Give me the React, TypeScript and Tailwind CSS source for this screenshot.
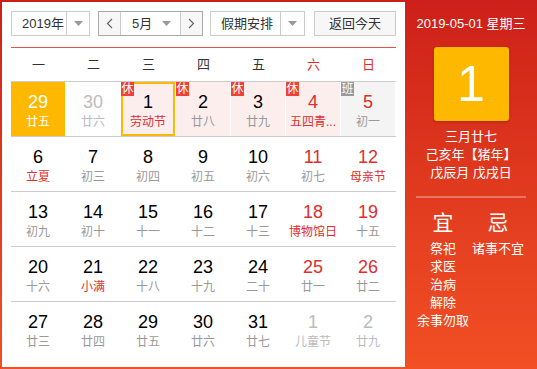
import React from "react";

type Day = {
  n: number;
  l: string;
  red?: boolean; // red number
  lred?: boolean; // red lunar text
  other?: boolean; // not in this month
  tag?: "休" | "班";
  selected?: boolean;
  today?: boolean;
};

const weeks: Day[][] = [
  [
    { n: 29, l: "廿五", other: true, today: true },
    { n: 30, l: "廿六", other: true },
    { n: 1, l: "劳动节", lred: true, tag: "休", selected: true },
    { n: 2, l: "廿八", tag: "休" },
    { n: 3, l: "廿九", tag: "休" },
    { n: 4, l: "五四青...", red: true, lred: true, tag: "休" },
    { n: 5, l: "初一", red: true, tag: "班" },
  ],
  [
    { n: 6, l: "立夏", lred: true },
    { n: 7, l: "初三" },
    { n: 8, l: "初四" },
    { n: 9, l: "初五" },
    { n: 10, l: "初六" },
    { n: 11, l: "初七", red: true },
    { n: 12, l: "母亲节", red: true, lred: true },
  ],
  [
    { n: 13, l: "初九" },
    { n: 14, l: "初十" },
    { n: 15, l: "十一" },
    { n: 16, l: "十二" },
    { n: 17, l: "十三" },
    { n: 18, l: "博物馆日", red: true, lred: true },
    { n: 19, l: "十五", red: true },
  ],
  [
    { n: 20, l: "十六" },
    { n: 21, l: "小满", lred: true },
    { n: 22, l: "十八" },
    { n: 23, l: "十九" },
    { n: 24, l: "二十" },
    { n: 25, l: "廿一", red: true },
    { n: 26, l: "廿二", red: true },
  ],
  [
    { n: 27, l: "廿三" },
    { n: 28, l: "廿四" },
    { n: 29, l: "廿五" },
    { n: 30, l: "廿六" },
    { n: 31, l: "廿七" },
    { n: 1, l: "儿童节", other: true },
    { n: 2, l: "廿九", other: true },
  ],
];

const weekdays = ["一", "二", "三", "四", "五", "六", "日"];

function Caret() {
  return (
    <svg width="9" height="5" viewBox="0 0 9 5" className="fill-[#999]">
      <path d="M0 0h9L4.5 5z" />
    </svg>
  );
}

function Cell({ d }: { d: Day }) {
  let bg = "bg-white";
  if (d.today) bg = "bg-[#ffb800]";
  else if (d.tag === "休") bg = "bg-[#fdeeee]";
  else if (d.tag === "班") bg = "bg-[#f4f4f4]";

  let num = "text-black";
  if (d.today) num = "text-white";
  else if (d.other) num = "text-[#bbbbbb]";
  else if (d.red) num = "text-[#e02d2d]";

  let lunar = "text-[#999]";
  if (d.today) lunar = "text-white";
  else if (d.other) lunar = "text-[#bbbbbb]";
  else if (d.lred) lunar = "text-[#e02d2d]";

  return (
    <div className="relative h-[54px] mr-px">
      <div
        className={`flex h-full flex-col items-center ${bg} ${
          d.selected ? "border-2 border-[#ffb800] pt-[8px]" : "pt-[10px]"
        }`}
      >
        <span className={`text-[18px] leading-[20px] ${num}`}>{d.n}</span>
        <span className={`mt-[1px] text-[12px] leading-[18px] whitespace-nowrap ${lunar}`}>{d.l}</span>
      </div>
      {d.tag && (
        <span
          className={`absolute left-0 top-0 flex h-[14px] w-[13px] items-center justify-center text-[12px] leading-none text-white ${
            d.tag === "休" ? "bg-[#f04134]" : "bg-[#999]"
          }`}
        >
          {d.tag}
        </span>
      )}
    </div>
  );
}

export default function App() {
  return (
    <div
      className="flex h-[369px] w-[537px] bg-gradient-to-b from-[#cd1f19] to-[#f24f24] text-[#333]"
      style={{ fontFamily: "'Liberation Sans', 'Noto Sans CJK SC', sans-serif" }}
    >
      {/* Calendar */}
      <div className="my-[2px] ml-[2px] w-[403px] bg-white px-[9px] pt-[9px]">
        {/* Controls */}
        <div className="flex h-[25px] items-stretch text-[13px]">
          <div className="flex w-[79px] border border-[#ccc]">
            <div className="flex flex-1 items-center pl-[10px]">2019年</div>
            <div className="flex w-[23px] items-center justify-center border-l border-[#ccc]">
              <Caret />
            </div>
          </div>
          <div className="ml-[8px] flex w-[105px] border border-[#aaa]">
            <div className="flex w-[21px] items-center justify-center bg-[#f7f7f7] text-[#666]">
              <svg width="7" height="11" viewBox="0 0 7 11" fill="none" stroke="#666" strokeWidth="1.2">
                <path d="M6 1L1.5 5.5L6 10" />
              </svg>
            </div>
            <div className="flex flex-1 items-center justify-between border-x border-[#ccc] pl-[11px] pr-[9px]">
              <span>5月</span>
              <Caret />
            </div>
            <div className="flex w-[21px] items-center justify-center bg-[#f7f7f7]">
              <svg width="7" height="11" viewBox="0 0 7 11" fill="none" stroke="#666" strokeWidth="1.2">
                <path d="M1 1L5.5 5.5L1 10" />
              </svg>
            </div>
          </div>
          <div className="ml-[7px] flex w-[95px] border border-[#ccc]">
            <div className="flex flex-1 items-center pl-[10px]">假期安排</div>
            <div className="flex w-[24px] items-center justify-center border-l border-[#ccc]">
              <Caret />
            </div>
          </div>
          <div className="ml-[9px] flex w-[82px] items-center justify-center border border-[#ccc] bg-[#f7f7f7]">
            返回今天
          </div>
        </div>

        <div className="mt-[11px] h-px bg-[#e5534b]" />

        {/* Weekday header */}
        <div className="grid h-[33px] grid-cols-7 text-[13px]">
          {weekdays.map((w, i) => (
            <div
              key={w}
              className={`flex items-center justify-center ${i >= 5 ? "text-[#e02d2d]" : "text-[#333]"}`}
            >
              {w}
            </div>
          ))}
        </div>

        {/* Days */}
        <div className="border-t border-[#ccc]">
          {weeks.map((wk, r) => (
            <div
              key={r}
              className={`grid grid-cols-7 ${r < weeks.length - 1 ? "border-b border-[#ccc]" : ""}`}
            >
              {wk.map((d, i) => (
                <Cell key={i} d={d} />
              ))}
            </div>
          ))}
        </div>
      </div>

      {/* Side panel */}
      <div className="flex flex-1 flex-col items-center text-white">
        <div className="mt-[15px] text-[13px] leading-[18px]">2019-05-01 星期三</div>
        <div className="mt-[14px] flex h-[74px] w-[75px] items-center justify-center rounded-[3px] bg-[#ffb800] text-[50px] leading-none shadow-[0_1px_3px_rgba(0,0,0,0.2)]">
          1
        </div>
        <div className="mt-[7px] flex flex-col items-center text-[13px] leading-[18px]">
          <span>三月廿七</span>
          <span>己亥年【猪年】</span>
          <span>戊辰月 戊戌日</span>
        </div>
        <div className="mt-[14px] h-[2px] w-[110px] bg-white/30" />
        <div className="mt-[12px] flex w-full pl-[11px]">
          <div className="flex w-[54px] flex-col items-center text-[13px] leading-[18px]">
            <span className="mb-[4px] text-[21px] leading-[26px]">宜</span>
            <span>祭祀</span>
            <span>求医</span>
            <span>治病</span>
            <span>解除</span>
            <span>余事勿取</span>
          </div>
          <div className="flex w-[56px] flex-col items-center text-[13px] leading-[18px]">
            <span className="mb-[4px] text-[21px] leading-[26px]">忌</span>
            <span>诸事不宜</span>
          </div>
        </div>
      </div>
    </div>
  );
}
